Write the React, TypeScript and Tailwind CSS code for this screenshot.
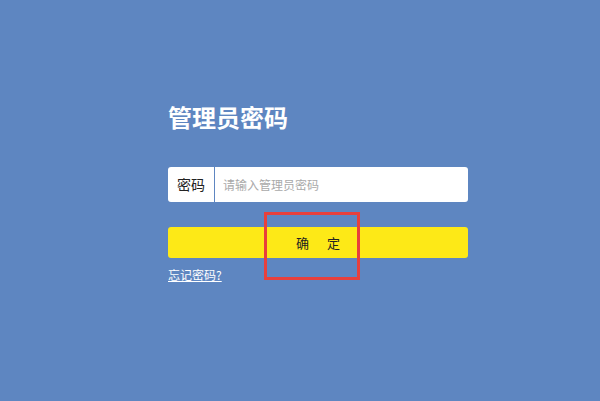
import React from "react";

export default function App() {
  return (
    <div
      className="relative w-[600px] h-[401px] bg-[#5e86c1] overflow-hidden"
      style={{ fontFamily: '"Noto Sans CJK SC", "Noto Sans", sans-serif' }}
    >
      <div className="pl-[168px] pt-[101px] w-[468px]">
        {/* Title */}
        <h1 className="text-[24px] leading-[32px] font-bold text-white">管理员密码</h1>

        {/* Password field */}
        <div className="mt-[34px] flex h-[35px] w-[300px] items-center rounded-[3px] bg-white">
          <div className="flex h-full w-[47px] items-center justify-center border-r border-[#5e86c1] text-[14px] text-[#222]">
            密码
          </div>
          <input
            type="password"
            placeholder="请输入管理员密码"
            className="h-full flex-1 bg-transparent pl-[8px] text-[12px] text-[#333] outline-none placeholder:text-[#a9a9a9]"
          />
        </div>

        {/* Submit */}
        <button className="mt-[25px] flex h-[31px] w-[300px] items-center justify-center gap-[18px] rounded-[3px] bg-[#fde917] text-[13px] text-[#222]">
          <span>确</span>
          <span>定</span>
        </button>

        <a href="#" className="mt-[9px] inline-block text-[12px] leading-[16px] text-white underline">
          忘记密码?
        </a>
      </div>

      {/* Annotation highlight */}
      <div className="absolute left-[264px] top-[212px] h-[68px] w-[96px] border-[3px] border-[#e8403c]" />
    </div>
  );
}
